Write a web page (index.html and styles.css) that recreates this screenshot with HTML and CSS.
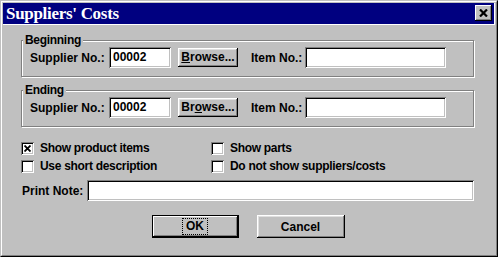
FILE: index.html
```html
<!DOCTYPE html>
<html>
<head>
<meta charset="utf-8">
<link rel="stylesheet" href="styles.css">
</head>
<body>
<div class="window">
  <div class="frame">
    <div class="titlebar">
      <span class="title">Suppliers' Costs</span>
      <div class="close"><svg width="9" height="8" viewBox="0 0 9 8"><path d="M1 0.5L8 7.5M8 0.5L1 7.5" stroke="#000" stroke-width="2.2" fill="none"/></svg></div>
    </div>
    <div class="content">
      <fieldset class="group">
        <legend>Beginning</legend>
        <div class="row">
          <span class="lbl sup-lbl">Supplier No.:</span>
          <div class="field sup">00002</div>
          <div class="btn browse"><u>B</u>rowse...</div>
          <span class="lbl item-lbl">Item No.:</span>
          <div class="field itm"></div>
        </div>
      </fieldset>
      <fieldset class="group second">
        <legend>Ending</legend>
        <div class="row">
          <span class="lbl sup-lbl">Supplier No.:</span>
          <div class="field sup">00002</div>
          <div class="btn browse">Br<u>o</u>wse...</div>
          <span class="lbl item-lbl">Item No.:</span>
          <div class="field itm"></div>
        </div>
      </fieldset>
      <div class="checks">
        <div class="check"><span class="box"><svg width="7" height="7" viewBox="0 0 7 7"><path d="M0.5 0.5L6.5 6.5M6.5 0.5L0.5 6.5" stroke="#000" stroke-width="1.8" fill="none"/></svg></span><span class="ctext">Show product items</span></div>
        <div class="check"><span class="box"></span><span class="ctext">Show parts</span></div>
        <div class="check"><span class="box"></span><span class="ctext">Use short description</span></div>
        <div class="check"><span class="box"></span><span class="ctext">Do not show suppliers/costs</span></div>
      </div>
      <div class="note-row">
        <span class="lbl note-lbl">Print Note:</span>
        <div class="field note"></div>
      </div>
      <div class="buttons">
        <div class="btn default"><span class="focus">OK</span></div>
        <div class="btn cancel">Cancel</div>
      </div>
    </div>
  </div>
</div>
</body>
</html>
```
FILE: styles.css
```css
* { box-sizing: border-box; }
html, body { margin: 0; padding: 0; background: #c0c0c0; }
body {
  width: 498px; height: 257px; overflow: hidden;
  font-family: "Liberation Sans", Arial, sans-serif;
  font-weight: bold; font-size: 12px; color: #000;
}
.window {
  width: 498px; height: 257px;
  border: 1px solid; border-color: #c0c0c0 #000 #000 #c0c0c0;
  background: #c0c0c0;
}
.frame {
  height: 100%;
  border: 1px solid; border-color: #fff #808080 #808080 #fff;
  padding: 1px;
  display: flex; flex-direction: column;
}
.titlebar {
  height: 22px; flex: none;
  background: #000080;
  border-right: 1px solid #fff; border-bottom: 1px solid #fff;
  display: flex; align-items: flex-start; justify-content: space-between;
  padding: 0 2px 0 3px;
}
.title {
  font-family: "Liberation Serif", "Times New Roman", serif;
  font-weight: bold; font-size: 17px; line-height: 21px;
  letter-spacing: -0.3px;
  color: #fff;
}
.close {
  width: 17px; height: 16px; margin-top: 2px;
  background: #c0c0c0;
  box-shadow: inset -1px -1px #000, inset 1px 1px #fff, inset -2px -2px #808080;
  display: flex; align-items: center; justify-content: center;
  padding: 0 1px 1px 0;
}
.close svg { display: block; }
.content { padding: 8px 21px 0 18px; }
.group {
  margin: 0; min-width: 0;
  border: 1px solid #808080;
  box-shadow: inset 1px 1px 0 #fff, 1px 1px 0 #fff;
  padding: 0 0 8px 1px;
}
.group legend {
  padding: 0 2px; margin-left: 0;
  line-height: 14px; background: #c0c0c0;
  letter-spacing: -0.3px;
}
.group.second { margin-top: 6px; }
.row {
  display: flex; align-items: center;
  padding-left: 7px; height: 21px;
}
.lbl { white-space: nowrap; }
.sup-lbl { width: 79px; }
.item-lbl { width: 54px; margin-left: 13px; }
.field {
  height: 21px; background: #fff;
  box-shadow: inset 1px 1px #808080, inset -1px -1px #fff, inset 2px 2px #000, inset -2px -2px #c0c0c0;
  padding: 0 2px 0 4px; line-height: 21px;
}
.sup { width: 62px; }
.itm { width: 141px; }
.btn {
  background: #c0c0c0;
  box-shadow: inset -1px -1px #000, inset 1px 1px #fff, inset -2px -2px #808080, inset 2px 2px #dfdfdf;
  display: flex; align-items: center; justify-content: center;
}
.browse { width: 60px; height: 19px; margin-left: 7px; padding-bottom: 1px; }
.checks {
  margin-top: 15px;
  display: grid; grid-template-columns: 190px auto; row-gap: 5px;
}
.check { display: flex; align-items: center; height: 13px; }
.box {
  width: 13px; height: 13px; background: #fff; flex: none;
  box-shadow: inset 1px 1px #808080, inset -1px -1px #fff, inset 2px 2px #000, inset -2px -2px #c0c0c0;
  display: flex; align-items: center; justify-content: center;
}
.box svg { display: block; }
.ctext { margin-left: 6px; white-space: nowrap; line-height: 13px; letter-spacing: -0.3px; }
.note-row { display: flex; align-items: center; margin-top: 7px; padding-left: 1px; }
.note-lbl { width: 65px; }
.note { width: 387px; }
.buttons {
  margin-top: 14px;
  display: flex; justify-content: center; gap: 18px;
  padding-left: 1px;
}
.default {
  width: 87px; height: 23px;
  border: 1px solid #000;
  box-shadow: inset -1px -1px #000, inset 1px 1px #fff, inset -2px -2px #808080;
}
.focus { outline: 1px dotted #000; padding: 0 3px; line-height: 15px; }
.cancel { width: 88px; height: 23px; }
```
